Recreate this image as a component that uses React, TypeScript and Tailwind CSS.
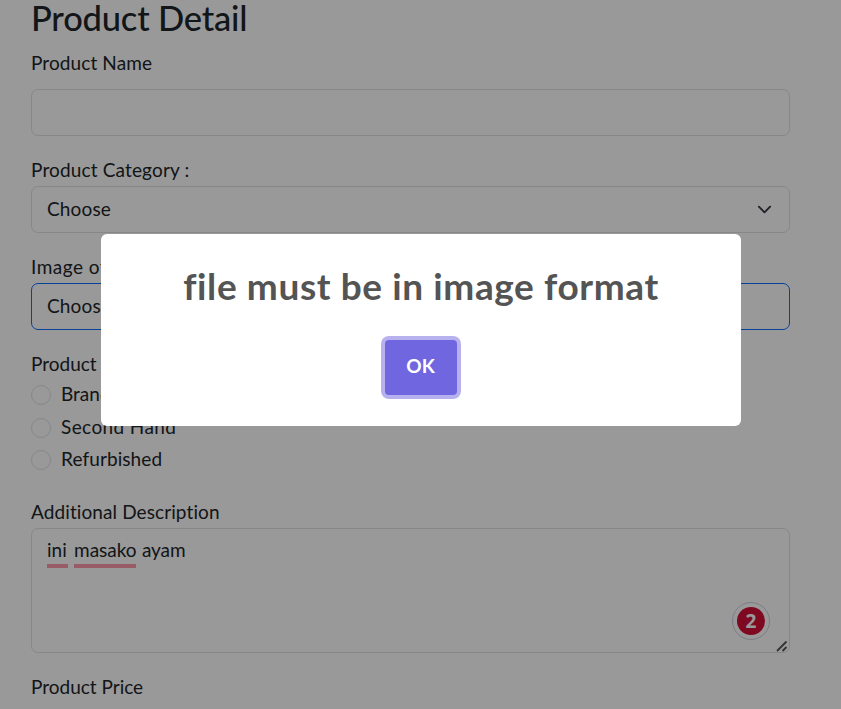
import React from "react";

const field = "w-full rounded-[7px] border border-[#dee2e6]";

function Label({ children, className = "" }: { children: React.ReactNode; className?: string }) {
  return (
    <div className="h-[30px] whitespace-nowrap leading-[28px]">
      <span className={className}>{children}</span>
    </div>
  );
}

function Radio({ label, className = "" }: { label: string; className?: string }) {
  return (
    <div className="flex h-[32.5px] items-start gap-[10px] whitespace-nowrap leading-[28px]">
      <span className="mt-[5px] size-5 rounded-full border border-[#dee2e6]" />
      <span className={className}>{label}</span>
    </div>
  );
}

function ProductForm() {
  return (
    <main className="ml-[31px] w-[759px] text-[19px] leading-[28px] text-[#212529]">
      <h2 className="h-[49px] whitespace-nowrap text-[34.5px] font-medium leading-[36px] tracking-[-0.2px]">
        Product Detail
      </h2>
      <Label className="tracking-[0.1px]">Product Name</Label>
      <div className={`${field} mt-[10px] mb-5 h-[47px]`} />
      <Label className="tracking-[0.15px]">Product Category :</Label>
      <div className={`${field} mb-5 flex h-[47px] items-center justify-between pr-[17px] pl-[15px]`}>
        <span className="-mt-0.5 tracking-[0.15px]">Choose</span>
        <svg width="15" height="15" viewBox="0 0 16 16" fill="none" stroke="#343a40" strokeWidth="2" strokeLinecap="round" strokeLinejoin="round">
          <path d="m2 5 6 6 6-6" />
        </svg>
      </div>
      <Label className="tracking-[0.5px]">Image of Product</Label>
      <div className="mb-5 flex h-[47px] w-full items-center rounded-[7px] border border-[#0d6efd] pl-[15px]">
        <span className="-mt-0.5 tracking-[0.15px]">Choose</span>
      </div>
      <Label>Product Condition</Label>
      <div className="mb-[20.5px]">
        <Radio label="Brand New" />
        <Radio label="Second Hand" className="tracking-[0.4px]" />
        <Radio label="Refurbished" className="tracking-[0.1px]" />
      </div>
      <Label className="tracking-[0.1px]">Additional Description</Label>
      <div className={`${field} relative mb-5 h-[125px] px-[15px] pt-[7px]`}>
        <p className="flex whitespace-nowrap">
          <span className="mr-[6px] h-[32px] w-[21px] border-b-4 border-[#ff9aab]">ini</span>
          <span className="mr-[6px] h-[32px] w-[62px] border-b-4 border-[#ff9aab]">masako</span>
          <span className="tracking-[-0.1px]">ayam</span>
        </p>
        <div className="absolute top-[73px] right-[19px] flex size-[38px] items-center justify-center rounded-full border-[1.5px] border-[#d0d0de]">
          <span className="flex size-7 items-center justify-center rounded-full bg-[#d5103a] pb-px font-['Open_Sans'] text-[19px] font-bold text-white">2</span>
        </div>
        <svg className="absolute right-px bottom-0" width="12" height="12" viewBox="0 0 12 12" stroke="#555" strokeWidth="1.8">
          <path d="M1 11 10.5 1.5M6.500 11l4-4" />
        </svg>
      </div>
      <Label>Product Price</Label>
    </main>
  );
}

export default function App() {
  return (
    <div className="relative h-[709px] w-[841px] overflow-hidden bg-white font-['Lato','Open_Sans',sans-serif] [font-variant-ligatures:none]">
      <ProductForm />
      <div className="absolute inset-0 flex items-start justify-center bg-black/40 pt-[234px]">
        <div role="dialog" className="flex h-[192px] w-[640px] flex-col items-center rounded-[6px] bg-white pt-[29px]">
          <h2 className="h-[47px] whitespace-nowrap pl-px text-[37px] font-bold leading-[46px] tracking-[0.6px] text-[#545454]">file must be in image format</h2>
          <button className="mt-[30px] h-[55px] w-[72px] rounded-[4px] bg-[#7066e0] pb-0.5 text-[19px] font-bold text-white shadow-[0_0_0_4px_#b7b2ef]">
            OK
          </button>
        </div>
      </div>
    </div>
  );
}
